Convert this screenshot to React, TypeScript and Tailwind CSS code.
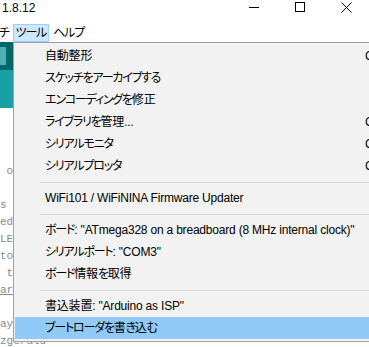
import React from "react";

const ui = "font-['Liberation_Sans','Noto_Sans_CJK_JP',sans-serif] [font-feature-settings:'palt']";

type Entry =
  | { kind: "item"; label: string; shortcut?: string; active?: boolean }
  | { kind: "sep" };

const toolsMenu: Entry[] = [
  { kind: "item", label: "自動整形", shortcut: "Ctrl+T" },
  { kind: "item", label: "スケッチをアーカイブする" },
  { kind: "item", label: "エンコーディングを修正" },
  { kind: "item", label: "ライブラリを管理...", shortcut: "Ctrl+Shift+I" },
  { kind: "item", label: "シリアルモニタ", shortcut: "Ctrl+Shift+M" },
  { kind: "item", label: "シリアルプロッタ", shortcut: "Ctrl+Shift+L" },
  { kind: "sep" },
  { kind: "item", label: "WiFi101 / WiFiNINA Firmware Updater" },
  { kind: "sep" },
  { kind: "item", label: 'ボード: "ATmega328 on a breadboard (8 MHz internal clock)"' },
  { kind: "item", label: 'シリアルポート: "COM3"' },
  { kind: "item", label: "ボード情報を取得" },
  { kind: "sep" },
  { kind: "item", label: '書込装置: "Arduino as ISP"' },
  { kind: "item", label: "ブートローダを書き込む", active: true },
];

// editor lines, scrolled so only the first couple of columns peek out
const codeLines: { text: string; link?: boolean }[] = [
  { text: " on for one second" },
  { text: "" },
  { text: "s have an on-board LED" },
  { text: "ed to digital pin 13" },
  { text: "LED pin independent" },
  { text: "to know what pin" },
  { text: " the Technical Specs" },
  { text: "arduino.cc/en/Main/Products", link: true },
  { text: "" },
  { text: "ay 2014" },
  { text: "zgerald" },
];

// kana runs are set a little tighter, like the Windows UI face
function Jp({ text }: { text: string }) {
  const parts = text.split(/([\u3040-\u30ff]+)/);
  return (
    <>
      {parts.map((p, i) =>
        /[\u3040-\u30ff]/.test(p) ? (
          <span key={i} className="tracking-[-1.2px]">
            {p}
          </span>
        ) : (
          <React.Fragment key={i}>{p}</React.Fragment>
        )
      )}
    </>
  );
}

function WindowControls() {
  return (
    <div className="ml-auto flex items-start">
      <div className="flex h-[14px] w-[46px] items-center justify-center">
        <svg width="10" height="14" viewBox="0 0 10 14">
          <path d="M0 7.5h10" stroke="#000" strokeWidth="1" />
        </svg>
      </div>
      <div className="flex h-[14px] w-[46px] items-center justify-center">
        <svg width="10" height="10" viewBox="0 0 10 10">
          <rect x="0.5" y="0.5" width="9" height="9" fill="none" stroke="#000" strokeWidth="1" />
        </svg>
      </div>
      <div className="flex h-[14px] w-[46px] items-center justify-center">
        <svg width="11" height="11" viewBox="0 0 11 11">
          <path d="M0.5 0.5l10 10M10.5 0.5l-10 10" stroke="#000" strokeWidth="1" />
        </svg>
      </div>
    </div>
  );
}

function ToolsMenu() {
  return (
    <div
      className={`absolute left-[13px] top-[42px] w-[420px] border border-[#a0a0a0] bg-[#f2f2f2] px-px pt-[2px] pb-[2px] text-[12px] tracking-[-0.2px] text-black ${ui}`}
    >
      {toolsMenu.map((e, i) =>
        e.kind === "sep" ? (
          <div key={i} className="flex h-[10px] items-center pl-[25px]">
            <div className="h-px flex-1 bg-[#d7d7d7]" />
          </div>
        ) : (
          <div
            key={i}
            className={`grid h-[22px] grid-cols-[320px_auto] items-center pl-[30px] whitespace-nowrap ${
              e.active ? "bg-[#91c9f7]" : ""
            }`}
          >
            <span>
              <Jp text={e.label} />
            </span>
            <span>{e.shortcut ?? ""}</span>
          </div>
        )
      )}
    </div>
  );
}

export default function App() {
  return (
    <div className={`relative h-[347px] w-[369px] overflow-hidden bg-white ${ui}`}>
      {/* title bar */}
      <div className="flex h-[24px] items-start">
        <span className="pl-[2px] text-[12px] leading-[16px] text-black">1.8.12</span>
        <WindowControls />
      </div>

      {/* menu bar */}
      <div className="flex h-[18px] items-stretch text-[12px] leading-[16px] text-black">
        <span className="-ml-[29px] flex items-center pr-[4px]">
          <Jp text="スケッチ" />
        </span>
        <span className="flex items-center border border-[#99d1ff] bg-[#cce8ff] px-[2px]">
          <Jp text="ツール" />
        </span>
        <span className="flex items-center pl-[4px]">
          <Jp text="ヘルプ" />
        </span>
      </div>

      {/* toolbar */}
      <div className="flex h-[28px] items-center bg-[#00676b]">
        <div className="-ml-[14px] h-[18px] w-[20px] bg-[#4fb0b2]" />
      </div>
      {/* tab strip */}
      <div className="h-[38px] bg-[#17a1a5]" />

      {/* editor */}
      <div className="pt-[55px] font-['Liberation_Mono',monospace] text-[11px] leading-[17px] text-[#8a8a8a]">
        {codeLines.map((l, i) => (
          <div key={i} className={`h-[17px] whitespace-pre ${l.link ? "underline" : ""}`}>
            {l.text}
          </div>
        ))}
      </div>

      <ToolsMenu />
    </div>
  );
}
